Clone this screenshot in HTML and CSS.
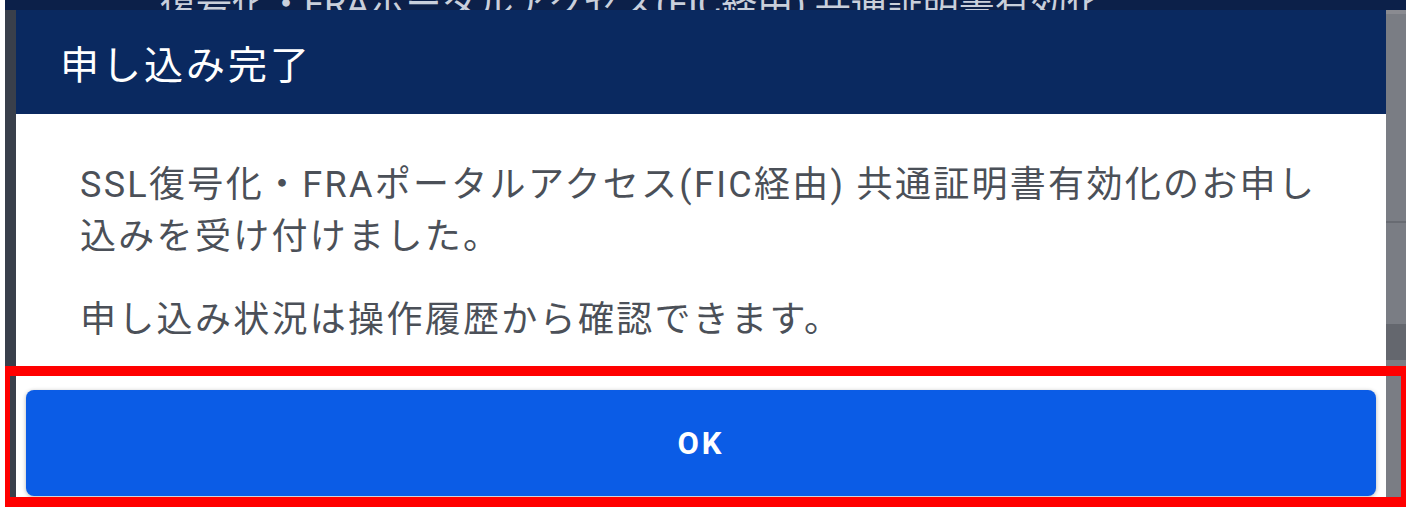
FILE: index.html
```html
<!DOCTYPE html>
<html lang="ja">

<head>
    <meta charset="UTF-8">
    <meta name="viewport" content="width=device-width, initial-scale=1.0">
    <title>申し込み完了</title>
    <link rel="stylesheet" href="styles.css">
</head>

<body>
    <div id="screen">
        <div class="page">
            <div class="page-bar">復号化・FRAポータルアクセス(FIC経由) 共通証明書有効化</div>
            <div class="page-side"></div>
        </div>
        <div class="dialog">
            <div class="dialog-head">申し込み完了</div>
            <div class="dialog-body">
                <p>SSL復号化・FRAポータルアクセス(FIC経由) 共通証明書有効化のお申し込みを受け付けました。</p>
                <p>申し込み状況は操作履歴から確認できます。</p>
            </div>
            <div class="dialog-foot">
                <button class="btn-ok">OK</button>
            </div>
        </div>
        <!-- 강조 표시 -->
        <div class="mark"></div>
    </div>
</body>
</html>
```

FILE: styles.css
```css
*{
    box-sizing: border-box;
}
body{
    margin: 0;
    background: #fff;
    font-family: Roboto, "Noto Sans CJK JP", sans-serif;
    overflow: hidden;
}
#screen{
    position: relative;
    height: 507px;
    margin: 0 5px;
    background: #393f4b;
    overflow: hidden;
}
.page{
    display: flex;
    flex-direction: column;
    height: 100%;
}
.page-bar{
    height: 10px;
    background: #0c2049;
    color: #c9cfdb;
    font-size: 36px;
    line-height: 10px;
    padding-left: 155px;
    white-space: nowrap;
    overflow: hidden;
}
.page-side{
    flex: 1;
    margin-left: auto;
    width: 20px;
    background: linear-gradient(#8a8b91 0, #8a8b91 4px, #7a7d84 4px, #7a7d84 211px, #686b72 211px, #686b72 213px, #7a7d84 213px, #7a7d84 314px, #64676e 314px, #64676e 350px, #7a7d84 350px);
}
.dialog{
    position: absolute;
    top: 10px;
    left: 11px;
    right: 20px;
    bottom: 0;
    background: #fff;
    display: flex;
    flex-direction: column;
}
.dialog-head{
    height: 104px;
    background: #0a2960;
    color: #fff;
    font-size: 39px;
    letter-spacing: 3px;
    display: flex;
    align-items: center;
    padding-left: 44px;
}
.dialog-body{
    padding: 45px 60px 0 64px;
    color: #4b5058;
    font-size: 36px;
    line-height: 52px;
    letter-spacing: 2.3px;
}
.dialog-body p{
    margin: 0 0 31px;
}
.dialog-foot{
    padding: 13px 10px 0;
}
.btn-ok{
    display: block;
    width: 100%;
    height: 106px;
    border: none;
    border-radius: 8px;
    background: #0b5ce6;
    box-shadow: 0 1px 4px rgba(0, 0, 0, 0.3);
    color: #fff;
    font-family: Roboto, sans-serif;
    font-weight: bold;
    font-size: 31px;
    letter-spacing: 3px;
    cursor: pointer;
}
.mark{
    position: absolute;
    left: -5px;
    right: -5px;
    top: 366px;
    bottom: 0;
    border: 10px solid #ff0000;
}
```
